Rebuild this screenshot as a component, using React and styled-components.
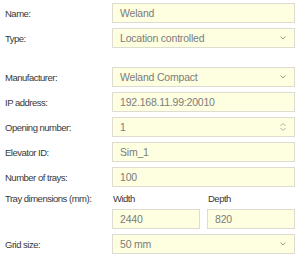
import React from "react";
import styled, { createGlobalStyle } from "styled-components";

const Global = createGlobalStyle`
  body {
    margin: 0;
    background: #fff;
    font-family: "Liberation Sans", Arial, sans-serif;
  }
`;

const Form = styled.div`
  width: 301px;
  padding: 3px 6px 0 5px;
  box-sizing: border-box;
  display: grid;
  grid-template-columns: 107px 183px;
  row-gap: 5px;
`;

const Label = styled.div`
  font-size: 9.5px;
  color: #383838;
  display: flex;
  align-items: ${(p) => (p.top ? "flex-start" : "center")};
  padding-top: ${(p) => (p.top ? "1px" : "0")};
  letter-spacing: -0.5px;
  white-space: nowrap;
`;

const Spacer = styled.div`
  grid-column: 1 / span 2;
  height: 9px;
`;

const Field = styled.div`
  height: 20px;
  box-sizing: border-box;
  background: #fefee0;
  border: 1px solid #dedcd0;
  display: flex;
  align-items: center;
  justify-content: space-between;
  padding: 0 8px 0 7px;
  font-size: 10.5px;
  color: #7c7c7c;
  letter-spacing: -0.2px;
`;

const Pair = styled.div`
  display: grid;
  grid-template-columns: 1fr 1fr;
  column-gap: 7px;
`;

const SubLabel = styled.div`
  font-size: 9.5px;
  line-height: 13px;
  color: #383838;
  margin: 0 0 4px 1px;
  letter-spacing: -0.5px;
`;

const Chevron = () => (
  <svg width="6" height="4" viewBox="0 0 6 4">
    <path d="M0.5 0.5l2.5 2.5L5.5 0.5" fill="none" stroke="#999" strokeWidth="1" />
  </svg>
);

const Spinner = () => (
  <svg width="6" height="10" viewBox="0 0 6 10">
    <path d="M0.5 4l2.5-2.5L5.5 4M0.5 6l2.5 2.5L5.5 6" fill="none" stroke="#aaa" strokeWidth="1" />
  </svg>
);

export default function App() {
  return (
    <>
      <Global />
      <Form>
        <Label>Name:</Label>
        <Field>Weland</Field>
        <Label>Type:</Label>
        <Field>
          Location controlled <Chevron />
        </Field>
        <Spacer />
        <Label>Manufacturer:</Label>
        <Field>
          Weland Compact <Chevron />
        </Field>
        <Label>IP address:</Label>
        <Field>192.168.11.99:20010</Field>
        <Label>Opening number:</Label>
        <Field>
          1 <Spinner />
        </Field>
        <Label>Elevator ID:</Label>
        <Field>Sim_1</Field>
        <Label>Number of trays:</Label>
        <Field>100</Field>
        <Label top>Tray dimensions (mm):</Label>
        <Pair>
          <div>
            <SubLabel>Width</SubLabel>
            <Field>2440</Field>
          </div>
          <div>
            <SubLabel>Depth</SubLabel>
            <Field>820</Field>
          </div>
        </Pair>
        <Label>Grid size:</Label>
        <Field>
          50 mm <Chevron />
        </Field>
      </Form>
    </>
  );
}
